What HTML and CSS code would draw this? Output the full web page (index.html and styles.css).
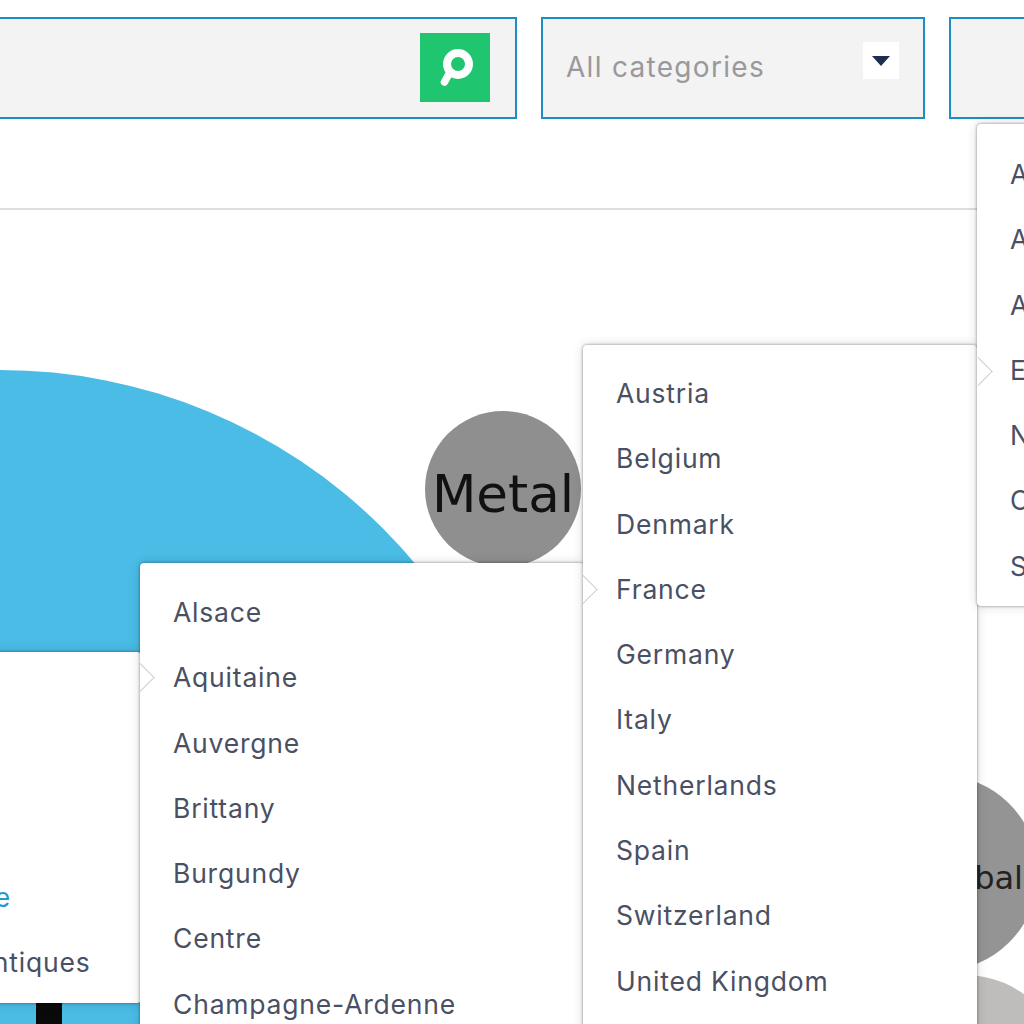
FILE: index.html
```html
<!DOCTYPE html>
<html lang="en">
<head>
<meta charset="utf-8">
<title>Categories</title>
<link rel="stylesheet" href="styles.css">
</head>
<body>
<div class="page">
  <header class="filters">
    <div class="box search">
      <button class="search-btn" aria-label="Search">
        <svg viewBox="0 0 70 70" width="70" height="70"><circle cx="38" cy="31" r="11" fill="none" stroke="#fff" stroke-width="8"/><path d="M29.500 40 L24.500 49" fill="none" stroke="#fff" stroke-width="7.500" stroke-linecap="round"/></svg>
      </button>
    </div>
    <div class="box select">
      <span class="select-label">All categories</span>
      <span class="caret-box"><span class="caret"></span></span>
    </div>
    <div class="box third"></div>
  </header>
  <div class="rule"></div>

  <svg class="canvas" viewBox="0 0 1024 1024" width="1024" height="1024">
    <circle cx="0" cy="912" r="542" fill="#4abce6"/>
    <rect x="36" y="1000" width="26" height="24" fill="#0a0a0a"/>
    <circle cx="503" cy="489" r="78" fill="#8f8f8f"/>
    <text class="bubble-lg" x="503" y="512" text-anchor="middle">Metal</text>
    <circle cx="940" cy="873" r="98" fill="#949494"/>
    <text class="bubble-sm" x="1023" y="889" text-anchor="end">Global</text>
    <circle cx="965" cy="1075" r="100" fill="#bfbcbc"/>
  </svg>

  <ul class="menu menu-regions">
    <li>Dordogne</li>
    <li>Gironde</li>
    <li>Landes</li>
    <li class="active">Lot-et-Garonne</li>
    <li>Pyrénées-Atlantiques</li>
  </ul>
  <ul class="menu menu-france">
    <li>Alsace</li>
    <li>Aquitaine</li>
    <li>Auvergne</li>
    <li>Brittany</li>
    <li>Burgundy</li>
    <li>Centre</li>
    <li>Champagne-Ardenne</li>
  </ul>
  <ul class="menu menu-europe">
    <li>Austria</li>
    <li>Belgium</li>
    <li>Denmark</li>
    <li>France</li>
    <li>Germany</li>
    <li>Italy</li>
    <li>Netherlands</li>
    <li>Spain</li>
    <li>Switzerland</li>
    <li>United Kingdom</li>
  </ul>
  <ul class="menu menu-world">
    <li>Africa</li>
    <li>Antarctica</li>
    <li>Asia</li>
    <li>Europe</li>
    <li>North America</li>
    <li>Oceania</li>
    <li>South America</li>
  </ul>

  <span class="pointer pointer-a"></span>
  <span class="pointer pointer-b"></span>
  <span class="pointer pointer-c"></span>
</div>
</body>
</html>
```
FILE: styles.css
```css
* { box-sizing: border-box; }
html, body { margin: 0; padding: 0; background: #fff; }
.page {
  position: relative;
  width: 1024px;
  height: 1024px;
  overflow: hidden;
  font-family: Inter, Roboto, "Liberation Sans", sans-serif;
}
.filters {
  display: flex;
  gap: 24px;
  margin-left: -20px;
  padding-top: 17px;
}
.box {
  flex: none;
  height: 102px;
  border: 2px solid #1e8dc4;
  background: #f3f3f4;
}
.search {
  width: 537px;
  display: flex;
  justify-content: flex-end;
  align-items: flex-start;
  padding: 14px 25px 0 0;
}
.search-btn {
  width: 70px;
  height: 69px;
  padding: 0;
  border: 0;
  background: #1fc66f;
  display: block;
}
.search-btn svg { display: block; }
.select {
  width: 384px;
  position: relative;
  display: flex;
  align-items: center;
  padding: 0 23px 2px;
}
.select-label {
  font-size: 28px;
  letter-spacing: 1.300px;
  color: #98999c;
}
.caret-box {
  position: absolute;
  top: 23px;
  right: 24px;
  width: 36px;
  height: 37px;
  background: #fff;
  display: flex;
  justify-content: center;
  padding-top: 14px;
}
.caret {
  width: 0;
  height: 0;
  border-left: 9px solid transparent;
  border-right: 9px solid transparent;
  border-top: 10px solid #1d2f4c;
}
.third { width: 200px; }
.rule {
  height: 2px;
  margin-top: 89px;
  background: #dcdee0;
}
.canvas {
  position: absolute;
  top: 0;
  left: 0;
}
.bubble-lg {
  font-family: "DejaVu Sans", sans-serif;
  font-size: 51.500px;
  fill: #111;
}
.bubble-sm {
  font-family: "DejaVu Sans", sans-serif;
  font-size: 32px;
  fill: #222;
}
.menu {
  position: absolute;
  margin: 0;
  padding: 16px 33px;
  list-style: none;
  background: #fff;
  border-radius: 4px;
  box-shadow: 0 0 3px rgba(0, 0, 0, 0.45), 0 0 12px rgba(0, 0, 0, 0.14);
  font-size: 26.500px;
  letter-spacing: 0.800px;
  line-height: 65.300px;
  color: #4a5063;
  white-space: nowrap;
}
.menu .active { color: #1f9bd1; }
.menu-regions { left: -227px; top: 652px; width: 368px; height: 351px; padding-top: 17px; }
.menu-france { left: 140px; top: 563px; width: 444px; height: 520px; padding-top: 17px; }
.menu-europe { left: 583px; top: 345px; width: 394px; height: 720px; }
.menu-world { left: 977px; top: 124px; width: 300px; height: 482px; padding-top: 18px; }
.pointer {
  position: absolute;
  width: 17px;
  height: 32px;
  overflow: hidden;
}
.pointer::before {
  content: "";
  position: absolute;
  left: -13px;
  top: 5px;
  width: 22px;
  height: 22px;
  background: #fff;
  border-top: 1px solid #cfcfcf;
  border-right: 1px solid #cfcfcf;
  transform: rotate(45deg);
}
.pointer-a { left: 140px; top: 661px; }
.pointer-b { left: 583px; top: 573px; }
.pointer-c { left: 978px; top: 355px; }
```
